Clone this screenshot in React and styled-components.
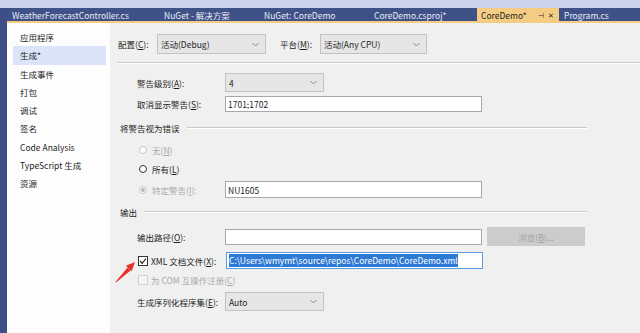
import React from 'react';
import styled, { createGlobalStyle } from 'styled-components';

const GlobalStyle = createGlobalStyle`
  html, body {
    margin: 0;
    padding: 0;
    background: #ccd3ec;
  }
  body {
    font-family: "Noto Sans CJK SC", "Noto Sans", sans-serif;
    font-size: 8.5px;
    color: #1e1e1e;
  }
`;

const tabs = [
  { name: 'WeatherForecastController.cs', w: 151 },
  { name: 'NuGet - 解决方案', w: 99 },
  { name: 'NuGet: CoreDemo', w: 109 },
  { name: 'CoreDemo.csproj*', w: 106 },
  { name: 'CoreDemo*', w: 82, active: true },
  { name: 'Program.cs', w: 80 },
];

const navItems = [
  '应用程序',
  '生成*',
  '生成事件',
  '打包',
  '调试',
  '签名',
  'Code Analysis',
  'TypeScript 生成',
  '资源',
];

const Chevron = () => (
  <svg width="7" height="5" viewBox="0 0 7 5">
    <path d="M0.5 1 L3.5 4 L6.5 1" fill="none" stroke="#8a8a8a" strokeWidth="1" />
  </svg>
);

const Select = ({ value, width }) => (
  <Dropdown $w={width}>
    <span>{value}</span>
    <Chevron />
  </Dropdown>
);

const Radio = ({ disabled, checked, children }) => (
  <OptionRow>
    <RadioDot $disabled={disabled}>{checked && <Dot />}</RadioDot>
    <OptionText $disabled={disabled}>{children}</OptionText>
  </OptionRow>
);

const CheckMark = () => (
  <svg width="8" height="8" viewBox="0 0 8 8">
    <path d="M1 4 L3.2 6.3 L7 1.5" fill="none" stroke="#1e1e1e" strokeWidth="1.1" />
  </svg>
);

const App = () => {
  return (
    <Window>
      <GlobalStyle />
      <TopBand />
      <Frame>
        <TabStrip>
          {tabs.map((t) => (
            <Tab key={t.name} $w={t.w} $active={t.active}>
              <span>{t.name}</span>
              {t.active && (
                <TabIcons>
                  <span>⊣</span>
                  <span>✕</span>
                </TabIcons>
              )}
            </Tab>
          ))}
        </TabStrip>
        <TabUnderline />
        <Body>
          <Sidebar>
            {navItems.map((n) => (
              <NavItem key={n} $selected={n === '生成*'}>
                {n}
              </NavItem>
            ))}
          </Sidebar>
          <Content>
            <ConfigRow>
              <ConfigLabel $w={39}>
                配置(<u>C</u>):
              </ConfigLabel>
              <Select value="活动(Debug)" width={109} />
              <ConfigLabel $w={40} $ml={14}>
                平台(<u>M</u>):
              </ConfigLabel>
              <Select value="活动(Any CPU)" width={107} />
            </ConfigRow>
            <Divider />

            <FieldRow $mt={10}>
              <FieldLabel>
                警告级别(<u>A</u>):
              </FieldLabel>
              <Select value="4" width={99} />
            </FieldRow>
            <FieldRow $mt={2}>
              <FieldLabel>
                取消显示警告(<u>S</u>):
              </FieldLabel>
              <TextBox>1701;1702</TextBox>
            </FieldRow>

            <GroupHeader $mt={5}>
              <span>将警告视为错误</span>
              <GroupLine />
            </GroupHeader>
            <Radios>
              <Radio disabled>
                无(<u>N</u>)
              </Radio>
              <Radio>
                所有(<u>L</u>)
              </Radio>
              <FieldRow $mt={2} $flush>
                <Radio disabled checked>
                  特定警告(<u>I</u>):
                </Radio>
                <TextBox $h={17}>NU1605</TextBox>
              </FieldRow>
            </Radios>

            <GroupHeader $mt={3}>
              <span>输出</span>
              <GroupLine />
            </GroupHeader>
            <FieldRow $mt={6}>
              <FieldLabel>
                输出路径(<u>O</u>):
              </FieldLabel>
              <TextBox />
              <BrowseButton>
                浏览(<u>B</u>)...
              </BrowseButton>
            </FieldRow>
            <FieldRow $mt={5}>
              <CheckLabel>
                <CheckBox>
                  <CheckMark />
                </CheckBox>
                <span>
                  XML 文档文件(<u>X</u>):
                </span>
              </CheckLabel>
              <TextBox $h={17} $focused>
                <Selection>C:\Users\wmymt\source\repos\CoreDemo\CoreDemo.xml</Selection>
              </TextBox>
            </FieldRow>
            <FieldRow>
              <CheckLabel $disabled>
                <CheckBox $disabled />
                <span>
                  为 COM 互操作注册(<u>C</u>)
                </span>
              </CheckLabel>
            </FieldRow>
            <FieldRow $mt={3}>
              <FieldLabel>
                生成序列化程序集(<u>E</u>):
              </FieldLabel>
              <Select value="Auto" width={99} />
            </FieldRow>

            <Arrow width="28" height="28" viewBox="0 0 28 28">
              <polygon points="4,24.6 3.4,24 15.6,9.4 18.6,12.4" fill="#e8302a" />
              <polygon points="23,4 19.7,13.3 13.9,7.7" fill="#e8302a" />
            </Arrow>
          </Content>
        </Body>
      </Frame>
    </Window>
  );
};

const Window = styled.div`
  width: 640px;
  height: 333px;
  overflow: hidden;
  display: flex;
  flex-direction: column;
`;

const TopBand = styled.div`
  height: 8px;
  background: #ccd3ec;
  flex: none;
`;

const Frame = styled.div`
  flex: 1;
  display: flex;
  flex-direction: column;
  background: #3d4f86;
  padding-left: 7px;
  min-height: 0;
`;

const TabStrip = styled.div`
  height: 13px;
  display: flex;
  gap: 1px;
  padding-left: 1px;
  flex: none;
`;

const Tab = styled.div`
  width: ${(p) => p.$w}px;
  flex: none;
  display: flex;
  align-items: center;
  padding-left: 4px;
  box-sizing: border-box;
  white-space: nowrap;
  overflow: hidden;
  background: ${(p) => (p.$active ? '#f5cc84' : '#3f5288')};
  color: ${(p) => (p.$active ? '#1e1e1e' : '#e8ecf7')};
`;

const TabIcons = styled.span`
  display: flex;
  gap: 4px;
  margin-left: auto;
  margin-right: 5px;
  font-size: 7px;
  color: #2a2a2a;
`;

const TabUnderline = styled.div`
  height: 2px;
  background: #f5cc84;
  flex: none;
`;

const Body = styled.div`
  flex: 1;
  display: flex;
  min-height: 0;
`;

const Sidebar = styled.div`
  width: 103px;
  flex: none;
  background: #fdfdfd;
  padding: 5px 4px 0 6px;
  box-sizing: border-box;
`;

const NavItem = styled.div`
  height: 18.3px;
  line-height: 18.3px;
  padding-left: 7px;
  background: ${(p) => (p.$selected ? '#dbe4f8' : 'transparent')};
  white-space: nowrap;
`;

const Content = styled.div`
  position: relative;
  flex: 1;
  background: #f0f0f0;
  padding: 11px 0 0 8px;
  display: flex;
  flex-direction: column;
  align-items: flex-start;
`;

const ConfigRow = styled.div`
  display: flex;
  align-items: center;
  height: 20px;
`;

const ConfigLabel = styled.span`
  width: ${(p) => p.$w}px;
  margin-left: ${(p) => p.$ml || 0}px;
  white-space: nowrap;
`;

const Dropdown = styled.div`
  width: ${(p) => p.$w}px;
  height: 100%;
  box-sizing: border-box;
  border: 1px solid #c3c3c3;
  background: #e6e6e6;
  display: flex;
  align-items: center;
  justify-content: space-between;
  padding: 0 6px 0 3px;
  white-space: nowrap;
`;

const Divider = styled.div`
  align-self: stretch;
  height: 1px;
  margin-top: 8px;
  background: #c9c9c9;
  box-shadow: 0 1px 0 #ffffff;
`;

const FieldRow = styled.div`
  display: flex;
  align-items: center;
  height: 19px;
  margin-top: ${(p) => p.$mt || 0}px;
  padding-left: ${(p) => (p.$flush ? 0 : 19)}px;
`;

const FieldLabel = styled.span`
  width: 88px;
  flex: none;
  white-space: nowrap;
`;

const TextBox = styled.div`
  width: 257px;
  height: ${(p) => p.$h || 16}px;
  box-sizing: border-box;
  background: #ffffff;
  border: 1px solid ${(p) => (p.$focused ? '#5b9be0' : '#a8a8a8')};
  display: flex;
  align-items: center;
  padding-left: 2px;
  white-space: nowrap;
  overflow: hidden;
`;

const Selection = styled.span`
  background: #2d7ad6;
  color: #ffffff;
  line-height: 13px;
`;

const BrowseButton = styled.div`
  width: 98px;
  height: 19px;
  margin-left: 5px;
  background: #cccccc;
  color: #a2a2a2;
  display: flex;
  align-items: center;
  justify-content: center;
`;

const GroupHeader = styled.div`
  width: 467px;
  height: 19px;
  margin-top: ${(p) => p.$mt}px;
  padding-left: 2px;
  display: flex;
  align-items: center;
  gap: 7px;
`;

const GroupLine = styled.div`
  flex: 1;
  height: 1px;
  background: #c9c9c9;
  box-shadow: 0 1px 0 #ffffff;
`;

const Radios = styled.div`
  margin-top: 3px;
  padding-left: 21px;
  display: flex;
  flex-direction: column;
`;

const OptionRow = styled.div`
  width: 86px;
  height: 19px;
  display: flex;
  align-items: center;
  gap: 5px;
`;

const RadioDot = styled.span`
  width: 8px;
  height: 8px;
  box-sizing: border-box;
  border-radius: 50%;
  border: 1px solid ${(p) => (p.$disabled ? '#c4c4c4' : '#333333')};
  background: #ffffff;
  display: flex;
  align-items: center;
  justify-content: center;
`;

const Dot = styled.span`
  width: 4px;
  height: 4px;
  border-radius: 50%;
  background: #b8b8b8;
`;

const OptionText = styled.span`
  color: ${(p) => (p.$disabled ? '#a8a8a8' : '#1e1e1e')};
  white-space: nowrap;
`;

const CheckLabel = styled.span`
  width: 88px;
  flex: none;
  margin-left: 1px;
  display: flex;
  align-items: center;
  gap: 3px;
  white-space: nowrap;
  color: ${(p) => (p.$disabled ? '#aaaaaa' : '#1e1e1e')};
`;

const CheckBox = styled.span`
  width: 10px;
  height: 10px;
  flex: none;
  box-sizing: border-box;
  border: 1px solid ${(p) => (p.$disabled ? '#cfcfcf' : '#333333')};
  background: ${(p) => (p.$disabled ? '#f4f4f4' : '#ffffff')};
  display: flex;
  align-items: center;
  justify-content: center;
`;

const Arrow = styled.svg`
  position: absolute;
  left: 2px;
  top: 235px;
`;

export default App;
